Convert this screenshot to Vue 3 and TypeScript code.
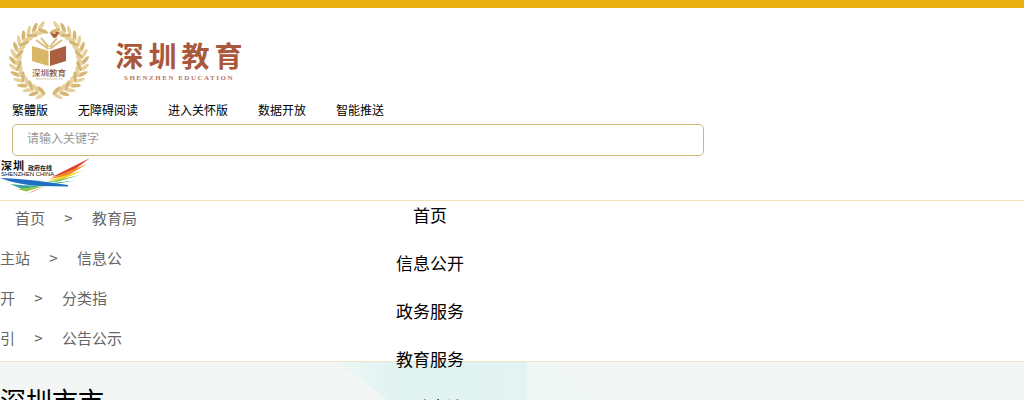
<script setup lang="ts">
const toolLinks = ['繁體版', '无障碍阅读', '进入关怀版', '数据开放', '智能推送']
const navItems = ['首页', '信息公开', '政务服务', '教育服务', '互动交流']
const crumbRows: [string, string][] = [
  ['首页', '教育局'],
  ['主站', '信息公'],
  ['开', '分类指'],
  ['引', '公告公示']
]

interface Leaf { x: number; y: number; r: number; light: boolean }
const leaves: Leaf[] = []
const cx = 49
const cy = 49
const radius = 33
for (let i = 0; i < 15; i++) {
  const deg = 18 + i * 11
  const a = (deg * Math.PI) / 180
  for (const side of [-1, 1]) {
    const x = cx + side * radius * Math.sin(a)
    const y = cy - radius * Math.cos(a)
    const dir = side === 1 ? deg - 90 : 90 - deg
    leaves.push({ x, y, r: dir + side * 38, light: i % 2 === 0 })
    leaves.push({ x, y, r: dir - side * 38, light: i % 2 === 1 })
  }
}
</script>

<template>
  <div class="page">
    <div class="top-bar"></div>
    <header class="header">
      <div class="brand">
        <svg class="emblem" viewBox="0 0 98 90" aria-hidden="true">
          <ellipse
            v-for="(l, i) in leaves"
            :key="i"
            cx="0"
            cy="-4.5"
            rx="1.9"
            ry="5.6"
            :fill="l.light ? '#e6d09c' : '#d6b673'"
            :transform="`translate(${l.x} ${l.y}) rotate(${l.r})`"
          />
          <path d="M32 34 L48.5 39 V54 L32 49Z" fill="#d9b568" />
          <path d="M66 34 L50 39 V54 L66 49Z" fill="#ab5f40" />
          <path d="M36 28 L48.5 37 M62 28 L50 37 M41 26 L48.5 35 M57 26 L50 35" stroke="#dcbf80" stroke-width="2" fill="none" />
          <path d="M50 20 q2 5 4 6 q3 0 4 -4 l2 -1 l-2 -1 q-2 -1 -3 2 q-2 0 -5 -2Z" fill="#ab5f40" />
          <text x="49" y="64" class="emblem-name">深圳教育</text>
          <text x="49" y="68" class="emblem-sub">SHENZHEN EDUCATION</text>
        </svg>
        <div class="wordmark">
          <span class="word-cn">深圳教育</span>
          <span class="word-en">SHENZHEN EDUCATION</span>
        </div>
      </div>
      <nav class="tools">
        <a v-for="t in toolLinks" :key="t">{{ t }}</a>
      </nav>
      <div class="search"><span>请输入关键字</span></div>
      <div class="gov-logo">
        <svg viewBox="0 0 91 36" width="91" height="36" aria-hidden="true">
          <text x="1" y="11.5" class="gov-cn">深圳</text>
          <text x="28" y="12" class="gov-small">政府在线</text>
          <text x="1" y="18" class="gov-en">SHENZHEN CHINA</text>
          <path d="M52 19 L90 0 L70 15Z" fill="#e0402c" />
          <path d="M49 21 L87 6 L67 18Z" fill="#f08a24" />
          <path d="M47 23 L84 12 L63 21Z" fill="#f5d327" />
          <path d="M45 24.5 L80 17 L58 23.5Z" fill="#7fc241" />
          <path d="M43 26 L76 22.5 L54 26Z" fill="#35ad6a" />
          <path d="M0 20 Q30 21 68 27 L68 28.5 L38 28 Q15 26 0 20Z" fill="#1f6fc4" />
          <path d="M10 26 Q25 28 44 27.5 L22 31Z" fill="#35a6a0" />
          <path d="M18 31 L44 28 L26 33.5Z" fill="#8cc63f" />
          <path d="M27 36 L46 28 L33 33Z" fill="#e0402c" />
        </svg>
      </div>
    </header>

    <section class="bar">
      <div class="crumbs">
        <div v-for="(row, i) in crumbRows" :key="i" class="crumb-row" :class="{ first: i === 0 }">
          <span>{{ row[0] }}</span><span class="sep">&gt;</span><span>{{ row[1] }}</span>
        </div>
      </div>
      <ul class="nav">
        <li v-for="n in navItems" :key="n">{{ n }}</li>
      </ul>
    </section>

    <main class="main">
      <div class="tint"></div>
      <div class="tint-faint"></div>
      <h1>深圳市市场监督管理局</h1>
    </main>
  </div>
</template>

<style>
html, body { margin: 0; overflow: hidden; }
</style>

<style scoped>
.page {
  width: 1024px;
  height: 400px;
  overflow: hidden;
  font-family: "Noto Sans CJK SC", "Liberation Sans", sans-serif;
  background: #fff;
}
.top-bar { height: 8px; background: #e9b10f; }
.header { height: 192px; }
.brand { display: flex; height: 90px; padding-top: 4px; box-sizing: border-box; }
.emblem { width: 98px; height: 90px; flex: none; overflow: visible; }
.wordmark {
  display: flex;
  flex-direction: column;
  align-items: center;
  width: 130px;
  margin: 25px 0 0 16px;
}
.word-cn {
  font-size: 28px;
  line-height: 36px;
  font-weight: 700;
  letter-spacing: 5px;
  margin-right: -5px;
  color: #a9583c;
  white-space: nowrap;
}
.word-en {
  font-size: 7px;
  line-height: 10px;
  letter-spacing: 1.5px;
  color: #b5785f;
  font-family: "Liberation Serif", serif;
  font-weight: 700;
  white-space: nowrap;
}
.tools { display: flex; height: 24px; padding-left: 12px; gap: 30px; align-items: center; }
.tools a { font-size: 12px; color: #000; line-height: 20px; white-space: nowrap; }
.search {
  box-sizing: border-box;
  width: 692px;
  height: 32px;
  margin: 2px 0 0 12px;
  padding-left: 14px;
  border: 1px solid #cdb778;
  border-radius: 5px;
  font-size: 12px;
  line-height: 26px;
  color: #999;
}
.gov-logo { height: 36px; margin-top: 2px; }
.gov-logo svg { display: block; }
.gov-cn { font-size: 11px; font-weight: 700; fill: #111; letter-spacing: 1px; }
.gov-small { font-size: 6px; font-weight: 700; fill: #222; }
.gov-en { font-size: 6px; fill: #111; font-family: "Liberation Sans", sans-serif; }
.emblem-name { font-size: 8.5px; fill: #8a5a3c; text-anchor: middle; font-weight: 500; }
.emblem-sub { font-size: 2.4px; fill: #c3ab78; text-anchor: middle; }

.bar {
  display: flex;
  box-sizing: border-box;
  height: 162px;
  border-top: 1px solid #f0e2b4;
  border-bottom: 1px solid #f0e6c4;
  position: relative;
  z-index: 1;
}
.crumbs {
  width: 137px;
  flex: none;
  font-size: 15px;
  line-height: 40px;
  color: #666;
  margin-top: -3px;
}
.crumb-row { height: 40px; white-space: nowrap; }
.crumb-row.first { padding-left: 15px; }
.sep { display: inline-block; width: 9px; text-align: center; margin: 0 19px; }
.nav {
  list-style: none;
  margin: 0 0 0 225px;
  padding: 0;
  width: 136px;
  flex: none;
  text-align: center;
  font-size: 17px;
  color: #000;
}
.nav li { height: 48px; line-height: 28px; white-space: nowrap; }

.main {
  position: relative;
  height: 38px;
  background: #f3f6f5;
  overflow: hidden;
}
.tint {
  position: absolute;
  left: 337px;
  top: 0;
  width: 190px;
  height: 38px;
  background: linear-gradient(90deg, #eef7f5 0, #e0f3f1 30%, #e2f3f1 100%);
  clip-path: polygon(0 0, 100% 0, 100% 100%, 50px 100%);
}
.tint-faint {
  position: absolute;
  left: 527px;
  top: 0;
  width: 80px;
  height: 38px;
  background: #f0f6f4;
  clip-path: polygon(0 0, 40% 0, 100% 100%, 0 100%);
}
h1 {
  position: relative;
  width: 106px;
  margin: 0;
  padding-top: 20px;
  font-size: 26px;
  line-height: 36px;
  font-weight: 400;
  color: #000;
}
</style>
